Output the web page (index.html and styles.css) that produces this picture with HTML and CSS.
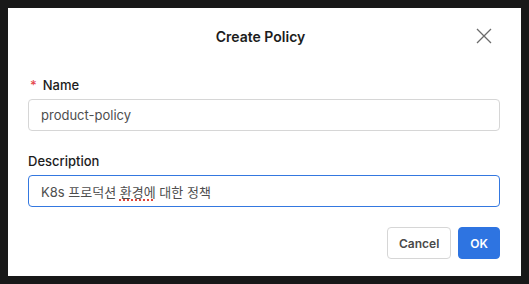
FILE: index.html
```html
<!DOCTYPE html>
<html lang="en">
<head>
    <meta charset="UTF-8">
    <title>Create Policy</title>
    <link rel="stylesheet" href="styles.css">
</head>
<body>

    <div class="dialog">
        <div class="dialog-header">
            <h2 class="dialog-title">Create Policy</h2>
            <button class="close-btn" aria-label="Close">
                <svg width="16" height="16" viewBox="0 0 16 16">
                    <path d="M1 1 L15 15 M15 1 L1 15" stroke="#6b6b6b" stroke-width="1.3" fill="none"/>
                </svg>
            </button>
        </div>

        <form class="dialog-body">
            <div class="field">
                <label class="field-label"><span class="required">*</span>Name</label>
                <input class="text-input" type="text" value="product-policy">
            </div>

            <div class="field">
                <label class="field-label">Description</label>
                <div class="text-input focused">K8s 프로덕션 <span class="spell">환경에</span> 대한 정책</div>
            </div>
        </form>

        <div class="dialog-footer">
            <button class="btn">Cancel</button>
            <button class="btn btn-primary">OK</button>
        </div>
    </div>

</body>
</html>
```

FILE: styles.css
```css
body {
    margin: 0;
    padding: 8px;
    background-color: #181818;
    font-family: Inter, "Noto Sans CJK KR", sans-serif;
    color: #1c1c1c;
}

.dialog {
    width: 513px;
    height: 268px;
    background-color: #fff;
    display: flex;
    flex-direction: column;
}

.dialog-header {
    position: relative;
    height: 56px;
    display: flex;
    align-items: center;
    justify-content: center;
    padding-right: 8px;
}

.dialog-title {
    margin: 0;
    font-size: 14px;
    font-weight: 600;
    color: #1c1c1c;
}

.close-btn {
    position: absolute;
    right: 28px;
    top: 19px;
    width: 18px;
    height: 18px;
    padding: 0;
    border: none;
    background: none;
    display: flex;
    align-items: center;
    justify-content: center;
}

.dialog-body {
    padding: 11px 21px 0 20px;
    display: flex;
    flex-direction: column;
    gap: 20px;
}

.field {
    display: flex;
    flex-direction: column;
    gap: 4px;
}

.field-label {
    font-size: 13px;
    font-weight: 500;
    line-height: 20px;
    color: #1c1c1c;
}

.required {
    color: #e5484d;
    margin-right: 6px;
    margin-left: 2px;
}

.text-input {
    box-sizing: border-box;
    height: 32px;
    width: 100%;
    padding: 0 12px;
    border: 1px solid #d6d6d6;
    border-radius: 4px;
    font-family: inherit;
    font-size: 13px;
    color: #4e4e4e;
    display: flex;
    align-items: center;
    white-space: pre;
    outline: none;
}

.text-input.focused {
    border-color: #3478e0;
}

.spell {
    text-decoration: underline dotted #e0463b;
    text-decoration-thickness: 1.5px;
    text-underline-offset: 3px;
}

.dialog-footer {
    margin-top: auto;
    padding: 0 21px 17px 0;
    display: flex;
    justify-content: flex-end;
    gap: 7px;
}

.btn {
    height: 32px;
    padding: 0 11px;
    border: 1px solid #d6d6d6;
    border-radius: 4px;
    background-color: #fff;
    font-family: inherit;
    font-size: 12px;
    font-weight: 600;
    color: #4a4a4a;
}

.btn-primary {
    background-color: #2e74e1;
    border-color: #2e74e1;
    color: #fff;
}
```
